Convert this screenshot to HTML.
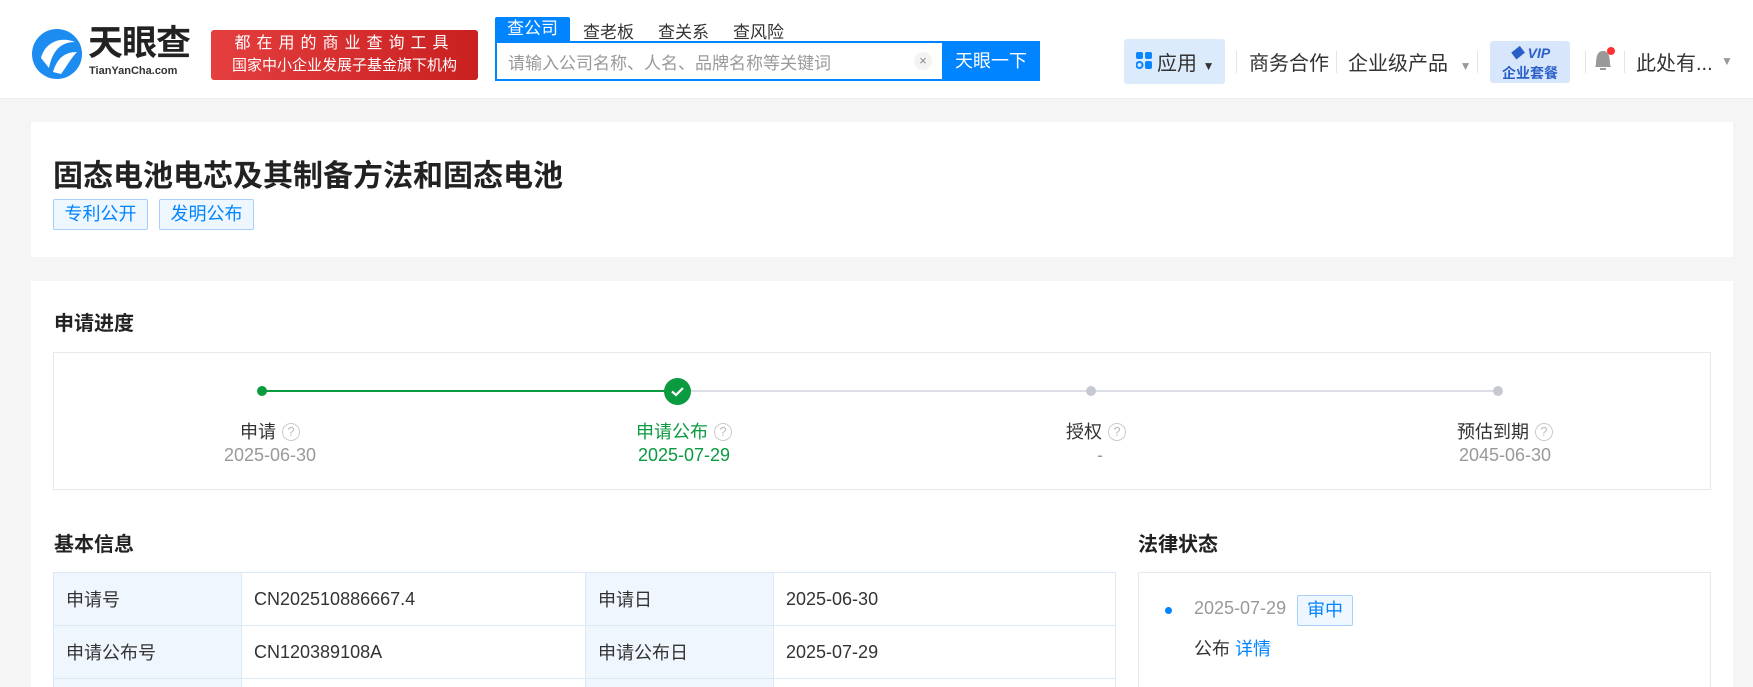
<!DOCTYPE html>
<html><head><meta charset="utf-8"><style>
*{margin:0;padding:0;box-sizing:border-box}
html{width:1753px;height:687px;overflow:hidden}
body{width:1753px;height:687px;overflow:hidden;background:#f5f5f5;font-family:"Liberation Sans","Noto Sans CJK SC",sans-serif;color:#333;position:relative}
.a{position:absolute}
.hdr{left:0;top:0;width:1753px;height:99px;background:#fff;border-bottom:1px solid #eee}
.card{background:#fff}
.q{display:inline-block;width:18px;height:18px;border:1.5px solid #ccc;border-radius:50%;color:#bbb;font-size:13px;line-height:15px;text-align:center;vertical-align:2px;margin-left:6px}
.lab{font-size:18px;text-align:center;width:300px}
.dt{font-size:18px;text-align:center;width:300px;color:#999}
td{border:1px solid #dde8f5;font-size:18px;padding-left:12px;height:53px}
td.k{background:#f0f6fd;color:#333}
</style></head><body>
<div class="a hdr"></div>
<svg class="a" style="left:31px;top:28px" width="52" height="52" viewBox="0 0 52 52"><circle cx="26" cy="26" r="25" fill="#1c8cf0"/><path d="M10 30 C14 14 30 8 44 14 C32 14 22 20 18 40 Z" fill="#fff"/><path d="M22 44 C26 30 34 24 46 24 C40 30 36 38 30 46Z" fill="#fff"/></svg>
<div class="a" style="left:88px;top:24px;font-size:35px;line-height:40px;font-weight:bold;color:#222;letter-spacing:-1px">天眼查</div>
<div class="a" style="left:89px;top:65px;font-size:11px;line-height:13px;font-weight:bold;color:#333">TianYanCha.com</div>
<div class="a" style="left:211px;top:30px;width:267px;height:50px;background:linear-gradient(90deg,#e43e3e,#c92020);border-radius:3px;color:#fff;text-align:center">
<div style="font-size:16px;line-height:20px;letter-spacing:6px;margin-top:4px">都在用的商业查询工具</div>
<div style="font-size:15px;line-height:20px;margin-top:2px">国家中小企业发展子基金旗下机构</div></div>
<div class="a" style="left:495px;top:17px;width:75px;height:24px;background:#0084ff;color:#fff;font-size:17px;text-align:center;line-height:24px;border-radius:2px 2px 0 0">查公司</div>
<div class="a" style="left:583px;top:18px;font-size:17px;color:#333">查老板</div>
<div class="a" style="left:658px;top:18px;font-size:17px;color:#333">查关系</div>
<div class="a" style="left:733px;top:18px;font-size:17px;color:#333">查风险</div>
<div class="a" style="left:495px;top:41px;width:448px;height:40px;border:2px solid #0084ff;border-right:none;font-size:17px;color:#999;padding:6px 11px">请输入公司名称、人名、品牌名称等关键词</div>
<div class="a" style="left:914px;top:52px;width:18px;height:18px;border-radius:50%;background:#f3f3f3;color:#888;font-size:13px;text-align:center;line-height:18px">×</div>
<div class="a" style="left:942px;top:41px;width:98px;height:40px;background:#0084ff;color:#fff;font-size:18px;text-align:center;line-height:40px">天眼一下</div>
<div class="a" style="left:1124px;top:39px;width:101px;height:45px;background:#dcebfc;border-radius:3px"></div>
<svg class="a" style="left:1136px;top:52px" width="16" height="18"><rect x="0" y="0" width="7" height="7" rx="2" fill="#0a84ff"/><rect x="9" y="0" width="7" height="7" rx="2" fill="#0a84ff"/><circle cx="3.5" cy="13" r="3" fill="none" stroke="#0a84ff" stroke-width="2"/><rect x="9" y="9" width="7" height="8" rx="2" fill="#0a84ff"/></svg>
<div class="a" style="left:1157px;top:47px;font-size:20px;color:#333">应用 <span style="font-size:12px">▼</span></div>
<div class="a" style="left:1236px;top:51px;width:1px;height:22px;background:#e5e5e5"></div>
<div class="a" style="left:1249px;top:47px;font-size:20px;color:#333">商务合作</div>
<div class="a" style="left:1336px;top:51px;width:1px;height:22px;background:#e5e5e5"></div>
<div class="a" style="left:1348px;top:47px;font-size:20px;color:#333">企业级产品 <span style="font-size:12px;color:#999;margin-left:6px">▼</span></div>
<div class="a" style="left:1477px;top:51px;width:1px;height:22px;background:#e5e5e5"></div>
<div class="a" style="left:1490px;top:41px;width:80px;height:42px;background:#d8e6fb;border-radius:3px;color:#2a5fc8;text-align:center;font-weight:bold"><div style="font-size:14px;font-style:italic;margin-top:2px">◆ VIP</div><div style="font-size:14px">企业套餐</div></div>
<div class="a" style="left:1585px;top:51px;width:1px;height:22px;background:#e5e5e5"></div>
<svg class="a" style="left:1592px;top:47px" width="26" height="26"><path d="M10 4 C5 5 4 10 4 18 L3 20 H19 L18 18 C18 10 17 5 12 4Z" fill="#999"/><rect x="8" y="21" width="6" height="2" fill="#999"/><circle cx="19" cy="4" r="4" fill="#f33"/></svg>
<div class="a" style="left:1624px;top:51px;width:1px;height:22px;background:#e5e5e5"></div>
<div class="a" style="left:1636px;top:47px;font-size:20px;color:#333">此处有...</div>
<div class="a" style="left:1721px;top:54px;font-size:12px;color:#999">▼</div>

<div class="a card" style="left:31px;top:122px;width:1702px;height:135px"></div>
<div class="a" style="left:53px;top:151px;font-size:30px;font-weight:bold;color:#222">固态电池电芯及其制备方法和固态电池</div>
<div class="a" style="left:53px;top:199px;width:95px;height:31px;border:1px solid #a8d0fb;background:#eef6ff;color:#0084ff;font-size:18px;text-align:center;line-height:29px;border-radius:2px">专利公开</div>
<div class="a" style="left:159px;top:199px;width:95px;height:31px;border:1px solid #a8d0fb;background:#eef6ff;color:#0084ff;font-size:18px;text-align:center;line-height:29px;border-radius:2px">发明公布</div>

<div class="a card" style="left:31px;top:281px;width:1702px;height:406px"></div>
<div class="a" style="left:54px;top:307px;font-size:20px;font-weight:bold;color:#222">申请进度</div>
<div class="a" style="left:53px;top:352px;width:1658px;height:138px;border:1px solid #e6e9ee"></div>
<div class="a" style="left:262px;top:390px;width:415px;height:2px;background:#0a9a40"></div>
<div class="a" style="left:677px;top:390px;width:821px;height:2px;background:#dcdfe8"></div>
<div class="a" style="left:257px;top:386px;width:10px;height:10px;border-radius:50%;background:#0a9a40"></div>
<div class="a" style="left:664px;top:378px;width:27px;height:27px;border-radius:50%;background:#0a9a40"></div>
<svg class="a" style="left:670px;top:385px" width="15" height="13"><path d="M2 6.5 L6 10 L13 3" stroke="#fff" stroke-width="2.2" fill="none"/></svg>
<div class="a" style="left:1086px;top:386px;width:10px;height:10px;border-radius:50%;background:#c6c9d0"></div>
<div class="a" style="left:1493px;top:386px;width:10px;height:10px;border-radius:50%;background:#c6c9d0"></div>
<div class="a lab" style="left:120px;top:418px">申请<span class="q">?</span></div>
<div class="a dt" style="left:120px;top:445px">2025-06-30</div>
<div class="a lab" style="left:534px;top:418px;color:#0a9a40">申请公布<span class="q">?</span></div>
<div class="a dt" style="left:534px;top:445px;color:#0a9a40">2025-07-29</div>
<div class="a lab" style="left:946px;top:418px">授权<span class="q">?</span></div>
<div class="a dt" style="left:950px;top:445px">-</div>
<div class="a lab" style="left:1355px;top:418px">预估到期<span class="q">?</span></div>
<div class="a dt" style="left:1355px;top:445px">2045-06-30</div>

<div class="a" style="left:54px;top:528px;font-size:20px;font-weight:bold;color:#222">基本信息</div>
<div class="a" style="left:53px;top:572px;width:1064px;height:115px;overflow:hidden">
<table style="width:1063px;border-collapse:collapse">
<tr><td class="k" style="width:188px">申请号</td><td style="width:344px">CN202510886667.4</td><td class="k" style="width:188px">申请日</td><td>2025-06-30</td></tr>
<tr><td class="k">申请公布号</td><td>CN120389108A</td><td class="k">申请公布日</td><td>2025-07-29</td></tr>
<tr><td class="k"></td><td></td><td class="k"></td><td></td></tr>
</table></div>
<div class="a" style="left:1054px;top:528px;font-size:20px;font-weight:bold;color:#222;left:1138px">法律状态</div>
<div class="a" style="left:1138px;top:572px;width:573px;height:115px;border:1px solid #e6e9ee;border-bottom:none"></div>
<div class="a" style="left:1165px;top:607px;width:7px;height:7px;border-radius:50%;background:#0084ff"></div>
<div class="a" style="left:1194px;top:598px;font-size:18px;color:#999">2025-07-29</div>
<div class="a" style="left:1297px;top:595px;width:56px;height:31px;border:1px solid #a8d0fb;background:#eef6ff;color:#0084ff;font-size:18px;text-align:center;line-height:29px;border-radius:2px">审中</div>
<div class="a" style="left:1194px;top:635px;font-size:18px;color:#333">公布 <span style="color:#0084ff">详情</span></div>
</body></html>
